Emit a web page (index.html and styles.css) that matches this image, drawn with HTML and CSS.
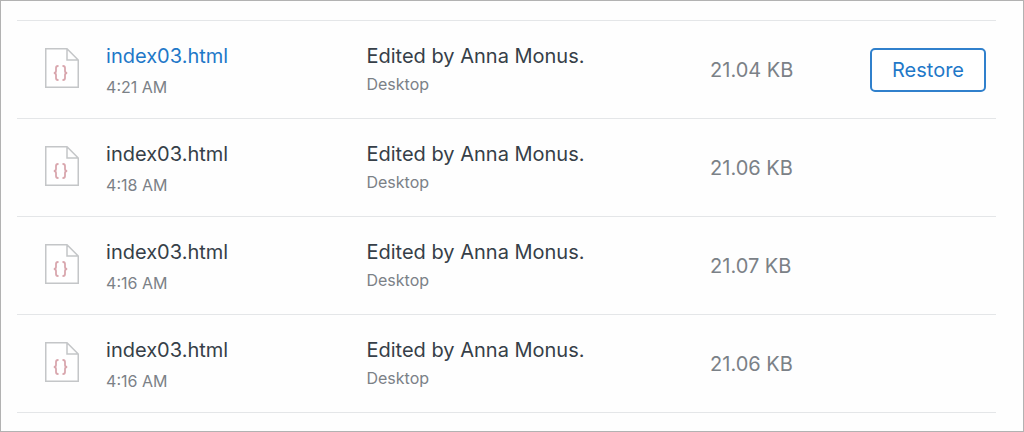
FILE: index.html
```html
<!DOCTYPE html>
<html lang="en">
<head>
<meta charset="utf-8">
<title>Version history</title>
<link rel="stylesheet" href="styles.css">
</head>
<body>
<svg class="symbols" aria-hidden="true">
  <symbol id="code-file" viewBox="0 0 34 40">
    <path d="M.75.75H22L33.25 12V39.25H.75ZM22 .75V12H33.25" fill="#fff" stroke="#c4c6c8" stroke-width="1.5"/>
    <path d="M13.500 18h-.5q-2 0-2 2v3q0 2-2.200 2 2.200 0 2.200 2v3q0 2 2 2h.5M17.500 18h.5q2 0 2 2v3q0 2 2.200 2-2.200 0-2.200 2v3q0 2-2 2h-.5" fill="none" stroke="#d9a7ae" stroke-width="1.800"/>
  </symbol>
</svg>
<main class="panel">
  <table class="versions">
    <colgroup><col class="col-icon"><col class="col-name"><col class="col-edit"><col class="col-size"><col class="col-action"></colgroup>
    <tbody>
      <tr class="version">
        <td class="icon-cell"><svg class="file-icon" aria-hidden="true"><use href="#code-file"/></svg></td>
        <td><a class="name name-active" href="#">index03.html</a><div class="time">4:21 AM</div></td>
        <td><div class="edit">Edited by Anna Monus.</div><div class="source">Desktop</div></td>
        <td class="size">21.04 KB</td>
        <td class="action"><button class="restore" type="button">Restore</button></td>
      </tr>
      <tr class="version">
        <td class="icon-cell"><svg class="file-icon" aria-hidden="true"><use href="#code-file"/></svg></td>
        <td><a class="name" href="#">index03.html</a><div class="time">4:18 AM</div></td>
        <td><div class="edit">Edited by Anna Monus.</div><div class="source">Desktop</div></td>
        <td class="size">21.06 KB</td>
        <td class="action"></td>
      </tr>
      <tr class="version">
        <td class="icon-cell"><svg class="file-icon" aria-hidden="true"><use href="#code-file"/></svg></td>
        <td><a class="name" href="#">index03.html</a><div class="time">4:16 AM</div></td>
        <td><div class="edit">Edited by Anna Monus.</div><div class="source">Desktop</div></td>
        <td class="size">21.07 KB</td>
        <td class="action"></td>
      </tr>
      <tr class="version">
        <td class="icon-cell"><svg class="file-icon" aria-hidden="true"><use href="#code-file"/></svg></td>
        <td><a class="name" href="#">index03.html</a><div class="time">4:16 AM</div></td>
        <td><div class="edit">Edited by Anna Monus.</div><div class="source">Desktop</div></td>
        <td class="size">21.06 KB</td>
        <td class="action"></td>
      </tr>
    </tbody>
  </table>
</main>
</body>
</html>
```
FILE: styles.css
```css
* { box-sizing: border-box; }
body {
  margin: 0;
  background: #fff;
  color: #363f48;
  font-family: Inter, "Liberation Sans", sans-serif;
  font-size: 20px;
}
.symbols { position: absolute; width: 0; height: 0; }
.panel {
  min-height: 100vh;
  padding: 19px 27px 17px 16px;
  border: 1px solid #b2b2b2;
  background: #fefefe;
}
.versions {
  width: 100%;
  table-layout: fixed;
  border-collapse: separate;
  border-spacing: 0;
  border-top: 1px solid #e4e6e8;
}
.col-icon { width: 9.1%; }
.col-name { width: 26.6%; }
.col-edit { width: 35.1%; }
.col-size { width: 16.2%; }
.col-action { width: 13%; }
.version td {
  height: 98px;
  padding: 0;
  border-bottom: 1px solid #e4e6e8;
  vertical-align: top;
  white-space: nowrap;
}
.version .icon-cell { padding: 27px 0 0 28px; }
.file-icon { display: block; width: 34px; height: 40px; }
.name, .edit { display: block; padding-top: 21px; line-height: 28px; }
.name { color: inherit; text-decoration: none; }
.name-active { color: #1f78c8; }
.time { color: #7b8187; font-size: 16px; line-height: 34px; }
.source { color: #7b8187; font-size: 16px; line-height: 28px; }
.version .size { color: #7b8187; vertical-align: middle; }
.version .action { padding-right: 10px; text-align: right; vertical-align: middle; }
.restore {
  display: block;
  width: 116px;
  height: 44px;
  margin-left: auto;
  border: 2px solid #3080cc;
  border-radius: 5px;
  background: #fff;
  color: #1f78c8;
  font: inherit;
  cursor: pointer;
}
```
